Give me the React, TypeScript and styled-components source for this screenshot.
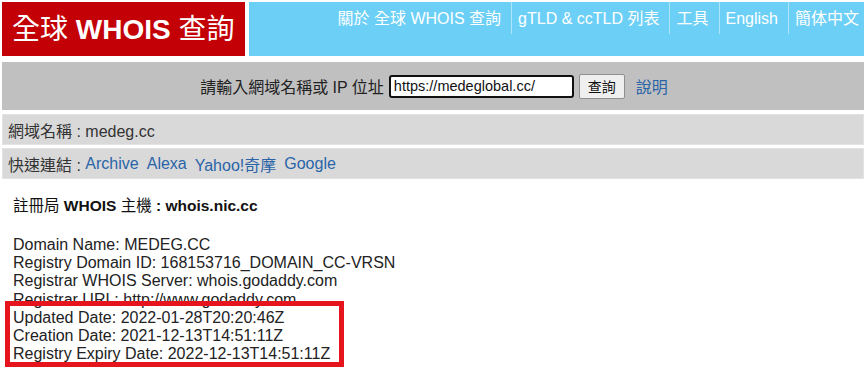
import React from "react";
import styled, { createGlobalStyle } from "styled-components";

const FONT = `"Liberation Sans", Arial, "Noto Sans CJK TC", sans-serif`;

const Global = createGlobalStyle`
  html, body { margin: 0; padding: 0; background: #fff; }
  body { font-family: ${FONT}; color: #222; }
`;

const Page = styled.div`
  width: 866px;
  height: 377px;
  overflow: hidden;
  padding: 2px 2px 0 2px;
  box-sizing: border-box;
`;

const Header = styled.header`
  display: flex;
  gap: 4px;
  height: 54px;
`;

const Brand = styled.div`
  width: 243px;
  flex: none;
  background: #c30006;
  color: #fff;
  display: flex;
  align-items: center;
  padding-left: 10px;
  padding-top: 1px;
  box-sizing: border-box;
  font-size: 28px;
  line-height: 1;
  white-space: nowrap;
  b { font-weight: 700; }
`;

const NavBar = styled.nav`
  flex: 1;
  background: #6ccff6;
  display: flex;
  justify-content: flex-end;
  align-items: flex-start;
`;

const NavItem = styled.a<{ $first?: boolean; $last?: boolean }>`
  color: #fff;
  text-decoration: none;
  font-size: 16px;
  height: 32px;
  line-height: 34px;
  padding: 0 ${(p) => (p.$last ? 5 : 10)}px 0 6px;
  border-left: ${(p) => (p.$first ? "none" : "1px solid rgba(255,255,255,0.45)")};
  white-space: nowrap;
`;

const SearchBar = styled.form`
  margin-top: 6px;
  height: 48px;
  background: #c0c0c0;
  display: flex;
  justify-content: center;
  align-items: center;
  padding-left: 2px;
  font-size: 16px;
  color: #222;
`;

const Label = styled.span`
  margin-right: 5px;
  white-space: nowrap;
`;

const Input = styled.input`
  width: 185px;
  height: 23px;
  box-sizing: border-box;
  border: 2px solid #111;
  border-radius: 3px;
  padding: 0 3px;
  font-family: ${FONT};
  font-size: 14.5px;
  color: #111;
  background: #fff;
  outline: none;
`;

const Button = styled.button`
  margin-left: 5px;
  width: 46px;
  height: 25px;
  background: #efefef;
  border: 1px solid #8f8f8f;
  border-radius: 2px;
  font-family: ${FONT};
  font-size: 14px;
  color: #111;
  padding: 0;
`;

const HelpLink = styled.a`
  margin-left: 11px;
  color: #2a64a8;
  text-decoration: none;
`;

const InfoRow = styled.div<{ $gap: number }>`
  margin-top: ${(p) => p.$gap}px;
  height: 31px;
  box-sizing: border-box;
  background: #d9d9d9;
  border: 1px solid #e3e3e3;
  padding-left: 5px;
  display: flex;
  align-items: center;
  font-size: 16px;
  color: #333;
  white-space: nowrap;
`;

const QuickLink = styled.a`
  color: #2a64a8;
  text-decoration: none;
  margin-right: 8px;
`;

const Content = styled.div`
  padding-left: 11px;
`;

const HostLine = styled.div`
  margin-top: 17px;
  font-size: 15.5px;
  line-height: 20px;
  color: #111;
  b { font-weight: 700; }
`;

const WhoisBlock = styled.div`
  position: relative;
  margin-top: 20px;
  font-size: 16px;
  line-height: 18.2px;
  color: #222;
  white-space: pre;
`;

const Highlight = styled.div`
  position: absolute;
  left: -8px;
  top: 65px;
  width: 339px;
  height: 66px;
  box-sizing: border-box;
  border: 5px solid #e6151d;
  pointer-events: none;
`;

const navItems = ["關於 全球 WHOIS 查詢", "gTLD & ccTLD 列表", "工具", "English", "簡体中文"];
const quickLinks = ["Archive", "Alexa", "Yahoo!奇摩", "Google"];
const whoisLines = [
  "Domain Name: MEDEG.CC",
  "Registry Domain ID: 168153716_DOMAIN_CC-VRSN",
  "Registrar WHOIS Server: whois.godaddy.com",
  "Registrar URL: http://www.godaddy.com",
  "Updated Date: 2022-01-28T20:20:46Z",
  "Creation Date: 2021-12-13T14:51:11Z",
  "Registry Expiry Date: 2022-12-13T14:51:11Z",
];

export default function App() {
  return (
    <>
      <Global />
      <Page>
        <Header>
          <Brand>
            全球&nbsp;<b>WHOIS</b>&nbsp;查詢
          </Brand>
          <NavBar>
            {navItems.map((n, i) => (
              <NavItem key={n} href="#" $first={i === 0} $last={i === navItems.length - 1}>
                {n}
              </NavItem>
            ))}
          </NavBar>
        </Header>
        <SearchBar onSubmit={(e) => e.preventDefault()}>
          <Label>請輸入網域名稱或 IP 位址</Label>
          <Input defaultValue="https://medeglobal.cc/" />
          <Button type="submit">查詢</Button>
          <HelpLink href="#">說明</HelpLink>
        </SearchBar>
        <InfoRow $gap={4}>網域名稱 : medeg.cc</InfoRow>
        <InfoRow $gap={3}>
          快速連結 :&nbsp;
          {quickLinks.map((l) => (
            <QuickLink key={l} href="#">
              {l}
            </QuickLink>
          ))}
        </InfoRow>
        <Content>
          <HostLine>
            註冊局 <b>WHOIS</b> 主機 <b>: whois.nic.cc</b>
          </HostLine>
          <WhoisBlock>
            {whoisLines.join("\n")}
            <Highlight />
          </WhoisBlock>
        </Content>
      </Page>
    </>
  );
}
